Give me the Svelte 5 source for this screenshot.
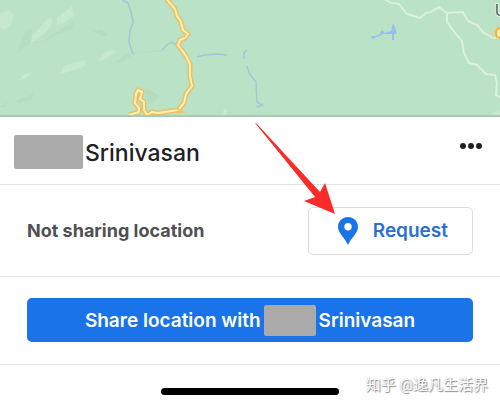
<script>
  let surname = 'Srinivasan';

  let road = 'M165 -3 L169 2 L175 9 L177 16 L181 22 L183 30 L188 34 L185 38 L180 40 L178 45 L181 49 L186 56 L190 64 L190 76 L192 86 L186 94 L184 103 L178 110 L158 113 L152 112 L147 115 L144 110 L144 102 L140 99 L142 92 L138 90 L136 94 L135 103 L139 108 L139 112 L129 115';
</script>

<div class="screen">
  <svg class="map" viewBox="0 0 500 117" preserveAspectRatio="xMidYMid slice" role="img" aria-label="Map">
    <rect width="500" height="117" fill="#bae2c6" />
    <g fill="#afd8bd">
      <path d="M17 53 L25 32 L32 29 L31 42 L42 42 L74 21 L72 29 L56 35 L43 42 L31 43 Z" opacity=".5" />
      <path d="M93 31 l8 -1 8 5 -7 1z M16 100 l18 -6 -3 6 -13 3z M0 107 l8 -5 -3 5z M145 88 l14 7 -6 9 -8 -5z" opacity=".6" />
      <path d="M115 63 l10 -9 36 -4 12 1 -36 2 -18 10z" opacity=".5" />
    </g>
    <g fill="#c6e8cf">
      <path d="M0 14 L9 10 L14 15 L11 25 L4 30 L0 27 Z" />
      <path d="M32 36 L43 24 L50 17 L53 22 L48 30 L31 44 Z M57 18 L72 6 L74 16 L62 24 L57 25 Z" />
      <path d="M60 74 L65 65 L86 60 L85 66 L72 71 Z M98 62 l5 -8 7 -4 7 1 -10 7z M18 81 l5 -6 10 -3 -7 6z M221 117 l3 -8 3 0 -1 8z M490 114 l10 -4 0 5z" />
    </g>
    <g fill="none" stroke="#a0c8d8" stroke-width="1.5">
      <path d="M122 0 L128 3 L131 12 L133 22 L130 31 L129 42 L133 54" />
      <path d="M162 50 L168 44 L172 42 L177 45 M197 57 L204 55 L218 54 L227 55" />
      <path d="M247 50 L244 53 L244 59 M247 66 L249 73 L256 82 L257 102 L262 105 L257 107" />
    </g>
    <path d="M371 36 L376 36 L380 34 L382 30 L385 33 L391 31 L393 23 L395 27 L397 34 L394 34 L394 40 L392 40 L392 34 L383 34 L375 38 L372 39 Z" fill="#96bff0" />
    <g fill="none" stroke="#dcf1dc" stroke-width="2" stroke-linejoin="round">
      <path d="M384 -1 L391 3 L399 4 L407 14 L414 16 L420 18 L426 13 L431 12 L439 7 L447 13 L463 12 L468 21 L477 25 L483 32 L493 38 L500 37" />
      <path d="M447 13 L447 22 L455 33 L462 41 L464 53 L469 63 L477 65 L486 74 L495 75 L497 83 L496 95 L500 97" />
    </g>
    <path d={road} fill="none" stroke="#e9c068" stroke-width="5" stroke-linejoin="round" />
    <path d={road} fill="none" stroke="#fff0b0" stroke-width="2" stroke-linejoin="round" />
    <path d="M176 108 L183 112 L177 113" fill="none" stroke="#edc568" stroke-width="2" />
    <path d="M491 33 L497 27 L497 39 Z" fill="#dfd69b" />
    <circle cx="501" cy="33" r="5" fill="#fff0b0" stroke="#efb23d" stroke-width="2" />
    <text class="place" x="495" y="16">U</text>
    <rect y="115" width="500" height="2" fill="#a9c9b3" />
  </svg>

  <header class="person">
    <span class="redacted name-block"></span>
    <h1>{surname}</h1>
    <button class="more" aria-label="More options">
      <svg width="24" height="8" viewBox="0 0 24 8">
        <circle cx="4" cy="4" r="3" />
        <circle cx="12" cy="4" r="3" />
        <circle cx="20" cy="4" r="3" />
      </svg>
    </button>
  </header>

  <section class="status">
    <p>Not sharing location</p>
    <div class="request-holder">
      <button class="request">
        <svg width="20" height="28" viewBox="0 0 20 28">
          <path fill-rule="evenodd" d="M10 0 C4.500 0 0 4.300 0 9.700 C0 16.500 7 20.500 10 28 C13 20.500 20 16.500 20 9.700 C20 4.300 15.500 0 10 0 Z M10 6 A3.700 3.700 0 1 1 10 13.400 A3.700 3.700 0 1 1 10 6 Z" fill="#1a73e8" />
        </svg>
        Request
      </button>
      <svg class="arrow" width="80" height="92" viewBox="0 0 80 92" aria-hidden="true">
        <path d="M0 0 L2 1 L65 69 L70 60 L80 91 L49 78 L60 74 Z" fill="#f92b2b" />
      </svg>
    </div>
  </section>

  <section class="share-row">
    <button class="share">
      Share location with
      <span class="redacted share-block"></span>
      {surname}
    </button>
  </section>

  <footer>
    <div class="home-bar"></div>
    <span class="watermark">知乎 @逸凡生活界</span>
  </footer>
</div>

<style>
  :global(body) {
    margin: 0;
    background: #fff;
  }

  .screen {
    font-family: Inter, "Liberation Sans", sans-serif;
    color: #202124;
    overflow: hidden;
  }

  .map {
    display: block;
    width: 100%;
    height: 117px;
  }

  .place {
    font-family: Roboto, sans-serif;
    font-size: 16px;
    fill: #52645a;
    stroke: #e8f4ea;
    stroke-width: 2px;
    paint-order: stroke;
  }

  button {
    font: inherit;
    cursor: pointer;
  }

  .person {
    display: flex;
    align-items: center;
    height: 67px;
    padding: 0 14px;
    border-bottom: 1px solid #dfe1e3;
  }

  .redacted {
    background: #aaa;
    border-radius: 2px;
  }

  .name-block {
    width: 69px;
    height: 34px;
    margin-top: 2px;
  }

  h1 {
    flex: 1;
    margin: 4px 0 0 2px;
    font-size: 23px;
    font-weight: 500;
    line-height: 28px;
  }

  .more {
    display: flex;
    margin-bottom: 10px;
    padding: 4px 3px;
    border: 0;
    background: none;
    fill: #202124;
  }

  .status {
    display: flex;
    align-items: center;
    justify-content: space-between;
    height: 91px;
    padding: 0 27px;
    border-bottom: 1px solid #e4e6e8;
  }

  .status p {
    margin: 0;
    font-size: 18px;
    font-weight: 700;
    line-height: 24px;
    color: #4f5052;
  }

  .request-holder {
    position: relative;
  }

  .request {
    display: flex;
    align-items: center;
    gap: 15px;
    height: 48px;
    padding: 0 24px 0 29px;
    border: 1px solid #dadce0;
    border-radius: 5px;
    background: #fff;
    font-size: 19px;
    font-weight: 600;
    color: #2b70d0;
  }

  .arrow {
    position: absolute;
    right: 138px;
    bottom: 40px;
    pointer-events: none;
  }

  .share-row {
    padding: 21px 27px 22px;
    border-bottom: 1px solid #e4e6e8;
  }

  .share {
    display: flex;
    align-items: center;
    justify-content: center;
    gap: 3px;
    width: 100%;
    height: 44px;
    padding: 0;
    border: 0;
    border-radius: 5px;
    background: #1a73e8;
    font-size: 19px;
    font-weight: 600;
    color: #fff;
  }

  .share-block {
    width: 52px;
    height: 31px;
  }

  footer {
    position: relative;
    display: flex;
    justify-content: center;
    padding: 23px 0 11px;
  }

  .home-bar {
    width: 178px;
    height: 7px;
    border-radius: 4px;
    background: #000;
  }

  .watermark {
    position: absolute;
    right: 12px;
    top: 8px;
    font-family: Roboto, "Noto Sans CJK SC", sans-serif;
    font-size: 15px;
    line-height: 24px;
    color: #fff;
    text-shadow: 1px 1px 1px #888, 0 0 1px #aaa;
  }
</style>
